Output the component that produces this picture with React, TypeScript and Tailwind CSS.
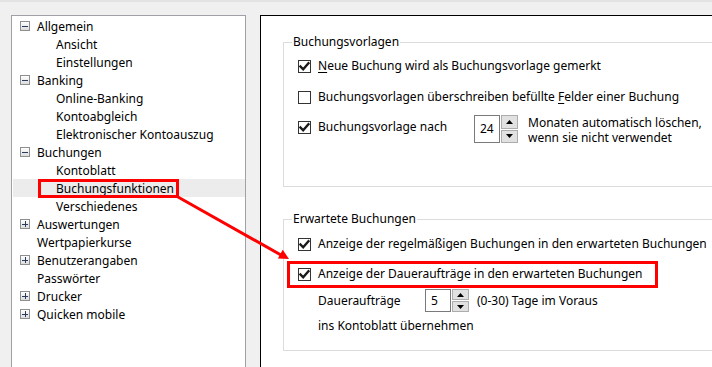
const font = { fontFamily: '"Noto Sans", "Open Sans", sans-serif' }

type TreeItem = { label: string; level: 0 | 1; expander?: 'minus' | 'plus'; selected?: boolean }

const tree: TreeItem[] = [
  { label: 'Allgemein', level: 0, expander: 'minus' },
  { label: 'Ansicht', level: 1 },
  { label: 'Einstellungen', level: 1 },
  { label: 'Banking', level: 0, expander: 'minus' },
  { label: 'Online-Banking', level: 1 },
  { label: 'Kontoabgleich', level: 1 },
  { label: 'Elektronischer Kontoauszug', level: 1 },
  { label: 'Buchungen', level: 0, expander: 'minus' },
  { label: 'Kontoblatt', level: 1 },
  { label: 'Buchungsfunktionen', level: 1, selected: true },
  { label: 'Verschiedenes', level: 1 },
  { label: 'Auswertungen', level: 0, expander: 'plus' },
  { label: 'Wertpapierkurse', level: 0 },
  { label: 'Benutzerangaben', level: 0, expander: 'plus' },
  { label: 'Passwörter', level: 0 },
  { label: 'Drucker', level: 0, expander: 'plus' },
  { label: 'Quicken mobile', level: 0, expander: 'plus' },
]

const Expander = ({ kind }: { kind: 'minus' | 'plus' }) => (
  <div className="relative w-[10px] h-[10px] border border-[#8e8f8f] bg-gradient-to-b from-white to-[#dcdcdc]">
    <div className="absolute left-[1px] right-[1px] top-[3.5px] h-[1px] bg-[#2a3a5c]" />
    {kind === 'plus' && <div className="absolute top-[1px] bottom-[1px] left-[3.5px] w-[1px] bg-[#2a3a5c]" />}
  </div>
)

const Check = ({ checked }: { checked: boolean }) => (
  <div className="w-[13px] h-[13px] border border-[#333333] bg-white flex items-center justify-center shrink-0">
    {checked && (
      <svg width="11" height="11" viewBox="0 0 11 11">
        <path d="M1.5 5.5 L4.2 8.3 L9.5 2.2" fill="none" stroke="#1a1a1a" strokeWidth="2.4" strokeLinecap="square" />
      </svg>
    )}
  </div>
)

const Spin = ({ value, h }: { value: string; h: number }) => (
  <div className="flex" style={{ height: h }}>
    <div className="w-[26px] h-full border border-[#7a7a7a] bg-white pl-[5px] flex items-center">{value}</div>
    <div className="ml-[1px] w-[17px] h-full flex flex-col gap-[1px]">
      <div className="flex-1 border border-[#adadad] bg-[#e1e1e1] flex items-center justify-center">
        <svg width="7" height="4" viewBox="0 0 7 4"><path d="M0 4 L3.5 0 L7 4Z" fill="#000" /></svg>
      </div>
      <div className="flex-1 border border-[#adadad] bg-[#e1e1e1] flex items-center justify-center">
        <svg width="7" height="4" viewBox="0 0 7 4"><path d="M0 0 L3.5 4 L7 0Z" fill="#000" /></svg>
      </div>
    </div>
  </div>
)

const CheckRow = ({ checked, children, className = '' }: { checked: boolean; children: React.ReactNode; className?: string }) => (
  <div className={`flex items-center h-[16px] ${className}`}>
    <Check checked={checked} />
    <span className="ml-[7px] whitespace-nowrap">{children}</span>
  </div>
)

const GroupLabel = ({ text }: { text: string }) => (
  <div className="-mt-[9px] ml-[8px] px-[1px] bg-white w-fit h-[16px] leading-[16px]">{text}</div>
)

export default function App() {
  return (
    <div
      className="relative w-[712px] h-[367px] overflow-hidden bg-[#f0f0f0] border-t-2 border-[#e3e3e3] text-[12px] text-black leading-[16px]"
      style={font}
    >
      <div className="flex mt-[13px] ml-[11px] gap-[14px] h-[400px]">
        <div className="w-[235px] shrink-0 border border-[#a0a0a8] bg-white pt-[1px]">
          {tree.map((item) => (
            <div
              key={item.label}
              className={`h-[18px] flex items-center ${item.selected ? 'bg-[#ececec] ml-[1px]' : ''} ${
                item.level === 0 ? 'pl-[8px]' : 'pl-[44px]'
              }`}
            >
              {item.level === 0 && (
                <div className="w-[17px] shrink-0">{item.expander && <Expander kind={item.expander} />}</div>
              )}
              <span className={`whitespace-nowrap pt-[2px] ${item.selected ? '-ml-[1px]' : ''}`}>{item.label}</span>
            </div>
          ))}
        </div>

        <div className="flex-1 border-t border-l border-black bg-white pl-[22px] pt-[26px]">
          <div className="w-[460px] h-[145px] border border-[#dcdcdc]">
            <GroupLabel text="Buchungsvorlagen" />
            <div className="pl-[14px]">
              <CheckRow checked className="mt-[8px]">
                <span className="underline underline-offset-2">N</span>eue Buchung wird als Buchungsvorlage gemerkt
              </CheckRow>
              <CheckRow checked={false} className="mt-[15px]">
                Buchungsvorlagen überschreiben befüllte <span className="underline underline-offset-2">F</span>elder einer Buchung
              </CheckRow>
              <div className="flex items-start mt-[10px]">
                <CheckRow checked className="w-[176px] mt-[4px]">
                  Buchungsvorlage nach
                </CheckRow>
                <Spin value="24" h={28} />
                <div className="ml-[10px] whitespace-nowrap">
                  <div className="h-[15px] leading-[15px]">Monaten automatisch löschen,</div>
                  <div className="h-[15px] leading-[15px]">wenn sie nicht verwendet</div>
                </div>
              </div>
            </div>
          </div>

          <div className="mt-[32px] w-[460px] h-[132px] border border-[#dcdcdc]">
            <GroupLabel text="Erwartete Buchungen" />
            <div className="pl-[14px]">
              <CheckRow checked className="mt-[9px]">
                Anzeige der regelmäßigen Buchungen in den erwarteten Buchungen
              </CheckRow>
              <CheckRow checked className="mt-[14px]">
                Anzeige der Daueraufträge in den erwarteten Buchungen
              </CheckRow>
              <div className="flex items-center mt-[7px] pl-[20px]">
                <span className="w-[107px]">Daueraufträge</span>
                <Spin value="5" h={23} />
                <span className="ml-[8px] whitespace-nowrap">(0-30) Tage im Voraus</span>
              </div>
              <div className="pl-[20px] mt-[6px]">ins Kontoblatt übernehmen</div>
            </div>
          </div>
        </div>
      </div>

      {/* red annotations */}
      <div className="absolute left-[38px] top-[177px] w-[141px] h-[19px] border-[3px] border-[#ff0000]" />
      <div className="absolute left-[287px] top-[259px] w-[371px] h-[27px] border-[3px] border-[#ff0000]" />
      <svg className="absolute left-0 top-0" width="712" height="367" style={{ top: -2 }}>
        <line x1="178" y1="197" x2="281" y2="255" stroke="#ff0000" strokeWidth="3" />
        <polygon points="289,259 277.9,258.5 282.7,249.7" fill="#ff0000" />
      </svg>
    </div>
  )
}
